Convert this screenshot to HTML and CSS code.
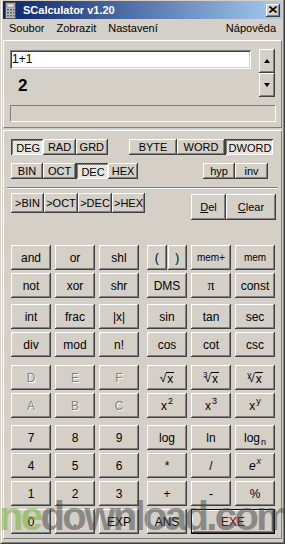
FILE: index.html
```html
<!DOCTYPE html>
<html lang="cs">
<head>
<meta charset="utf-8">
<title>SCalculator v1.20</title>
<link rel="stylesheet" href="styles.css">
</head>
<body>
<div class="window">
  <div class="frame">
    <div class="titlebar">
      <svg class="appicon" width="11" height="17" viewBox="0 0 11 17">
        <rect x="0.5" y="0.5" width="10" height="16" fill="#b8b8b8" stroke="#505050"/>
        <rect x="2" y="2" width="7" height="3" fill="#e8e8e8" stroke="#707070" stroke-width="0.6"/>
        <g fill="#606060">
          <rect x="2" y="7" width="2" height="1.5"/><rect x="5" y="7" width="2" height="1.5"/><rect x="8" y="7" width="1.5" height="1.5"/>
          <rect x="2" y="10" width="2" height="1.5"/><rect x="5" y="10" width="2" height="1.5"/><rect x="8" y="10" width="1.5" height="1.5"/>
          <rect x="2" y="13" width="2" height="1.5"/><rect x="5" y="13" width="2" height="1.5"/><rect x="8" y="13" width="1.5" height="1.5"/>
        </g>
      </svg>
      <span class="title">SCalculator v1.20</span>
      <div class="close">
        <svg width="8" height="7" viewBox="0 0 8 7"><path d="M0.5 0.5 L7.5 6.5 M7.5 0.5 L0.5 6.5" stroke="#000" stroke-width="1.6"/></svg>
      </div>
    </div>
    <div class="menubar">
      <span class="menu">Soubor</span>
      <span class="menu">Zobrazit</span>
      <span class="menu">Nastavení</span>
      <span class="menu help">Nápověda</span>
    </div>
    <div class="client">
      <div class="panel display">
        <div class="io">
          <div class="iocol">
            <div class="input">1+1</div>
            <div class="result">2</div>
          </div>
          <div class="spin">
            <div class="btn spinbtn"><span class="tri up"></span></div>
            <div class="btn spinbtn"><span class="tri down"></span></div>
          </div>
        </div>
        <div class="status"></div>
      </div>

      <div class="panel keys">
        <div class="mrow r1">
          <div class="group g-angle">
            <div class="btn sm on">DEG</div>
            <div class="btn sm">RAD</div>
            <div class="btn sm">GRD</div>
          </div>
          <div class="group g-size">
            <div class="btn sm">BYTE</div>
            <div class="btn sm">WORD</div>
            <div class="btn sm on">DWORD</div>
          </div>
        </div>
        <div class="mrow r2">
          <div class="group g-base">
            <div class="btn sm">BIN</div>
            <div class="btn sm">OCT</div>
            <div class="btn sm on">DEC</div>
            <div class="btn sm">HEX</div>
          </div>
          <div class="group g-hyp">
            <div class="btn sm">hyp</div>
            <div class="btn sm">inv</div>
          </div>
        </div>
        <div class="sep"></div>
        <div class="mrow r3">
          <div class="group g-conv">
            <div class="btn sm">&gt;BIN</div>
            <div class="btn sm">&gt;OCT</div>
            <div class="btn sm">&gt;DEC</div>
            <div class="btn sm">&gt;HEX</div>
          </div>
          <div class="group g-clear">
            <div class="btn sm del"><u>D</u>el</div>
            <div class="btn sm clr"><u>C</u>lear</div>
          </div>
        </div>

        <div class="keypad">
          <div class="sect">
            <div class="krow">
              <div class="btn">and</div><div class="btn">or</div><div class="btn">shl</div>
              <div class="pair"><div class="btn">(</div><div class="btn">)</div></div>
              <div class="btn small">mem+</div><div class="btn small">mem</div>
            </div>
            <div class="krow">
              <div class="btn">not</div><div class="btn">xor</div><div class="btn">shr</div>
              <div class="btn">DMS</div><div class="btn pi">π</div><div class="btn">const</div>
            </div>
          </div>
          <div class="sect s2">
            <div class="krow">
              <div class="btn">int</div><div class="btn">frac</div><div class="btn">|x|</div>
              <div class="btn">sin</div><div class="btn">tan</div><div class="btn">sec</div>
            </div>
            <div class="krow">
              <div class="btn">div</div><div class="btn">mod</div><div class="btn">n!</div>
              <div class="btn">cos</div><div class="btn">cot</div><div class="btn">csc</div>
            </div>
          </div>
          <div class="sect s3">
            <div class="krow">
              <div class="btn dis">D</div><div class="btn dis">E</div><div class="btn dis">F</div>
              <div class="btn"><span class="rad">√<span class="ol">x</span></span></div>
              <div class="btn"><span class="rad"><span class="idx">3</span>√<span class="ol">x</span></span></div>
              <div class="btn"><span class="rad"><span class="idx">y</span>√<span class="ol">x</span></span></div>
            </div>
            <div class="krow">
              <div class="btn dis">A</div><div class="btn dis">B</div><div class="btn dis">C</div>
              <div class="btn">x<span class="sup">2</span></div>
              <div class="btn">x<span class="sup">3</span></div>
              <div class="btn">x<span class="sup">y</span></div>
            </div>
          </div>
          <div class="sect s4">
            <div class="krow">
              <div class="btn">7</div><div class="btn">8</div><div class="btn">9</div>
              <div class="btn">log</div><div class="btn">ln</div><div class="btn">log<span class="sub">n</span></div>
            </div>
            <div class="krow">
              <div class="btn">4</div><div class="btn">5</div><div class="btn">6</div>
              <div class="btn">*</div><div class="btn">/</div><div class="btn"><i>e</i><span class="sup"><i>x</i></span></div>
            </div>
            <div class="krow">
              <div class="btn">1</div><div class="btn">2</div><div class="btn">3</div>
              <div class="btn">+</div><div class="btn">-</div><div class="btn">%</div>
            </div>
            <div class="krow">
              <div class="btn">0</div><div class="btn">.</div><div class="btn">EXP</div>
              <div class="btn">ANS</div><div class="btn exe">EXE</div>
            </div>
          </div>
        </div>
      </div>
    </div>
  </div>
  <div class="watermark" aria-hidden="true"><span class="wm-green">ne</span><span class="wm-grey">download.com</span></div>
</div>
</body>
</html>
```

FILE: styles.css
```css
html, body {
  margin: 0;
  padding: 0;
  background: #D4D0C8;
}
body {
  font-family: "Liberation Sans", Arial, sans-serif;
  color: #000;
}
.window {
  position: relative;
  width: 285px;
  height: 544px;
  box-sizing: border-box;
  border-left: 1px solid #D4D0C8;
  border-right: 1px solid #404040;
  border-bottom: 1px solid #404040;
  overflow: hidden;
  display: flex;
  flex-direction: column;
}
.frame {
  flex: 1;
  display: flex;
  flex-direction: column;
  border-left: 1px solid #fff;
  border-right: 1px solid #808080;
  border-bottom: 1px solid #808080;
  padding: 1px 1px 1px 1px;
  min-height: 0;
}

/* title bar */
.titlebar {
  height: 18px;
  flex: none;
  display: flex;
  align-items: center;
  background: linear-gradient(to right, #0A246A, #A6CAF0);
  padding-left: 2px;
}
.appicon {
  display: block;
  flex: none;
}
.title {
  margin-left: 7px;
  color: #fff;
  font-weight: bold;
  font-size: 11px;
  white-space: nowrap;
}
.close {
  margin-left: auto;
  margin-right: 2px;
  width: 14px;
  height: 13px;
  box-sizing: border-box;
  background: #D4D0C8;
  box-shadow: inset -1px -1px #404040, inset 1px 1px #fff, inset -2px -2px #808080;
  display: flex;
  align-items: center;
  justify-content: center;
  padding-bottom: 1px;
}
.close svg { display: block; }

/* menu */
.menubar {
  height: 18px;
  flex: none;
  display: flex;
  align-items: center;
  font-size: 11px;
}
.menu {
  padding: 0 6px;
  white-space: nowrap;
}
.menu.help { margin-left: auto; }

/* client */
.client {
  flex: 1;
  display: flex;
  flex-direction: column;
  min-height: 0;
}
.panel {
  border: 1px solid;
  border-color: #fff #808080 #808080 #fff;
}
.display {
  margin-top: 3px;
  padding: 8px 5px 5px 6px;
  flex: none;
}
.io {
  display: grid;
  grid-template-columns: 241px 16px;
  column-gap: 8px;
}
.iocol { display: flex; flex-direction: column; }
.input {
  margin-top: 1px;
  height: 19px;
  box-sizing: border-box;
  background: #fff;
  box-shadow: inset 1px 1px #808080, inset -1px -1px #fff, inset 2px 2px #404040, inset -2px -2px #D4D0C8;
  font-size: 12px;
  line-height: 19px;
  padding-left: 2px;
}
.result {
  margin-top: 7px;
  padding-left: 8px;
  font-size: 17px;
  font-weight: bold;
  line-height: 20px;
}
.spin { display: flex; flex-direction: column; }
.spinbtn {
  height: 24px;
}
.tri {
  width: 0;
  height: 0;
  border-left: 3.5px solid transparent;
  border-right: 3.5px solid transparent;
}
.tri.up { border-bottom: 4px solid #000; }
.tri.down { border-top: 4px solid #000; }
.status {
  margin-top: 8px;
  height: 17px;
  box-sizing: border-box;
  border: 1px solid;
  border-color: #808080 #fff #fff #808080;
}

/* keys panel */
.keys {
  position: relative;
  margin-top: 2px;
  margin-bottom: 2px;
  flex: 1;
  padding: 8px 5px 0 7px;
}

.btn {
  box-sizing: border-box;
  background: #D4D0C8;
  box-shadow: inset -1px -1px #404040, inset 1px 1px #fff, inset -2px -2px #808080;
  display: flex;
  align-items: center;
  justify-content: center;
  font-size: 12px;
  white-space: nowrap;
}
.btn.on {
  background: repeating-conic-gradient(#fff 0 25%, #D4D0C8 0 50%) 0 0 / 2px 2px;
  box-shadow: inset 1px 1px #404040, inset -1px -1px #fff, inset 2px 2px #808080;
  padding: 2px 0 0 2px;
}
.mrow {
  display: flex;
  align-items: flex-start;
}
.group { display: grid; }
.btn.sm {
  font-size: 11px;
  height: 16px;
}
.r1 { height: 16px; }
.r2 { height: 16px; margin-top: 8px; }
.g-angle { width: 97px; grid-template-columns: repeat(3, 1fr); }
.g-size { width: 144px; margin-left: 21px; grid-template-columns: repeat(3, 1fr); }
.g-base { width: 127px; grid-template-columns: 32px 33px 32px 30px; }
.g-hyp { width: 65px; margin-left: 65px; grid-template-columns: 32px 33px; }
.sep {
  margin: 8px -2px 0 -4px;
  height: 0;
  border-top: 1px solid #808080;
  border-bottom: 1px solid #fff;
}
.r3 { margin-top: 4px; height: 27px; }
.g-conv { width: 134px; grid-template-columns: 33px 34px 34px 33px; }
.g-conv .btn.sm { height: 20px; }
.g-clear { margin-left: 46px; margin-top: 1px; grid-template-columns: 35px 50px; }
.g-clear .btn.sm { height: 26px; font-size: 11px; }

/* keypad */
.keypad { margin-top: 25px; }
.sect { display: flex; flex-direction: column; row-gap: 3px; }
.s2 { margin-top: 6px; }
.s3 { margin-top: 8px; }
.s4 { margin-top: 7px; }
.krow {
  display: grid;
  grid-template-columns: 40px 40px 40px 44px 40px 40px;
  column-gap: 4px;
  height: 25px;
}
.krow > :nth-child(4) {
  justify-self: end;
  width: 40px;
}
.pair { display: flex; gap: 1px; }
.pair .btn { flex: 1; }
.btn.small { font-size: 10px; }
.btn.pi { font-family: "Liberation Serif", "Times New Roman", serif; font-size: 14px; }
.btn.dis { color: #808080; text-shadow: 1px 1px #fff; }
.btn.exe {
  grid-column: span 2;
  color: #800000;
  box-shadow: inset 0 0 0 1px #000, inset -2px -2px #404040, inset 2px 2px #fff, inset -3px -3px #808080;
}
.sup { font-size: 9px; position: relative; top: -5px; margin-left: 1px; }
.sub { font-size: 9px; position: relative; top: 4px; margin-left: 1px; }
.rad { position: relative; display: inline-flex; align-items: flex-end; }
.ol { border-top: 1px solid #000; line-height: 12px; padding: 0 1px; }
.idx {
  font-size: 8px;
  position: relative;
  top: -6px;
  margin-right: -3px;
}

/* watermark overlay */
.watermark {
  position: absolute;
  left: -2px;
  top: 496px;
  font-size: 40px;
  line-height: 40px;
  font-weight: bold;
  letter-spacing: -2.6px;
  white-space: nowrap;
  opacity: 0.5;
  pointer-events: none;
}
.wm-green { color: #6CB22C; }
.wm-grey { color: #444; }
```
